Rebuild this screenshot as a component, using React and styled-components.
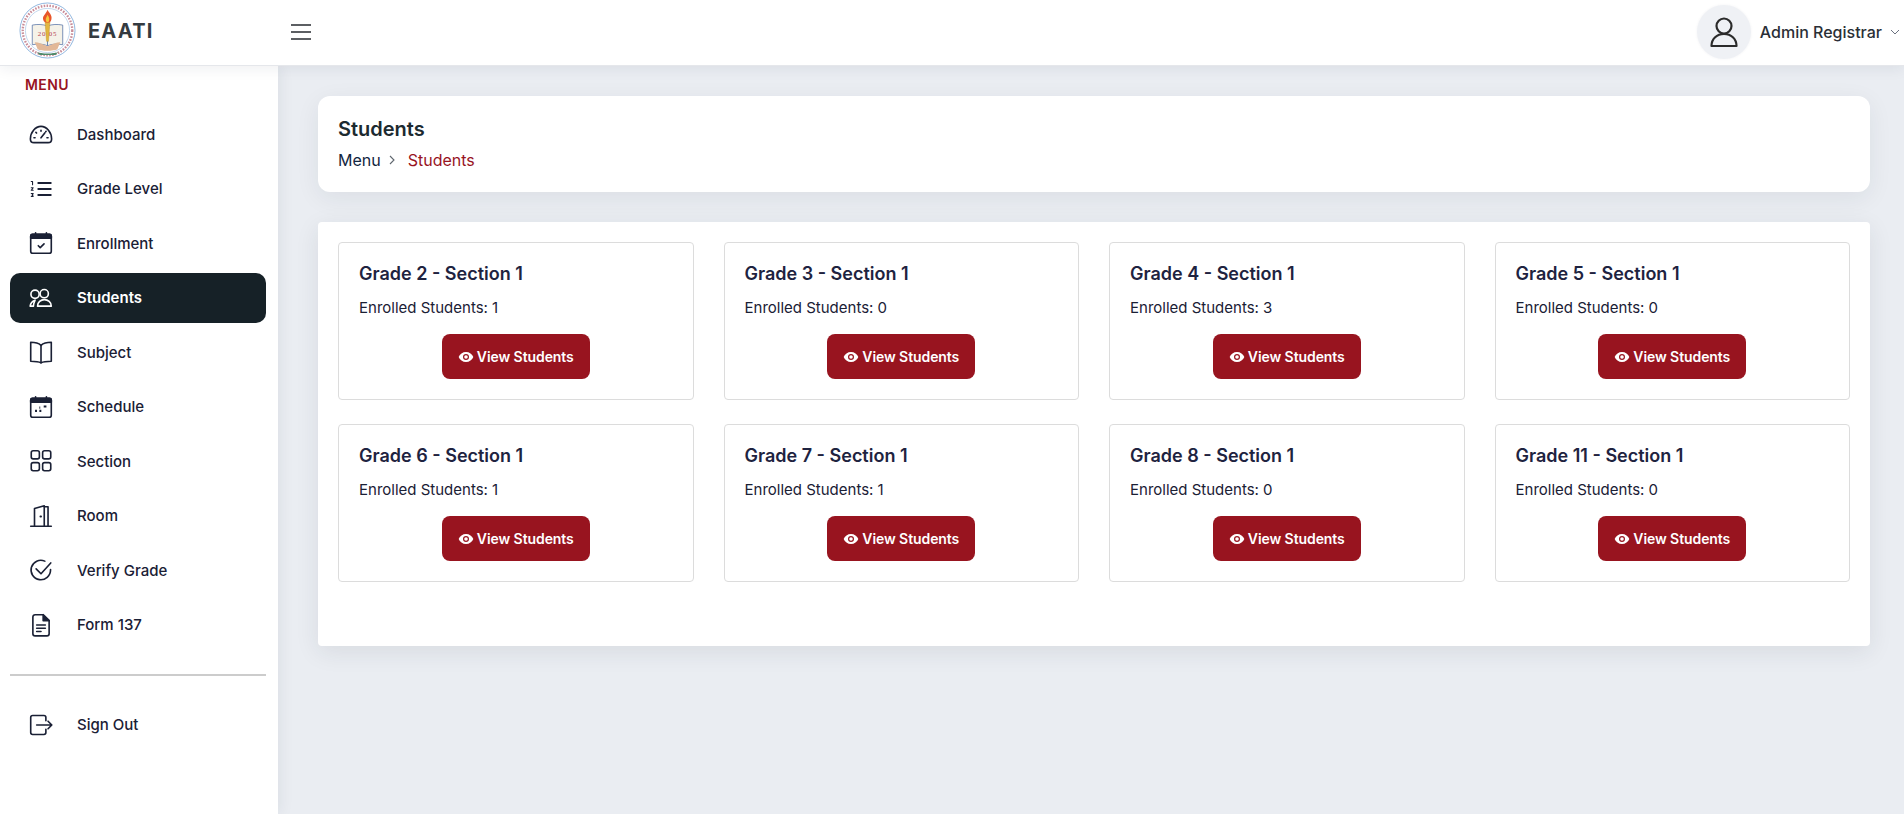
import React from "react";
import styled, { createGlobalStyle } from "styled-components";

const GlobalStyle = createGlobalStyle`
  html, body {
    margin: 0;
    padding: 0;
    background: #eaedf2;
    font-family: Inter, "Noto Sans", sans-serif;
    color: #1a2035;
  }
  * {
    box-sizing: border-box;
  }
`;

const Icon = ({ children, size = 26, stroke = "currentColor", width = 1.5 }) => (
  <svg width={size} height={size} viewBox="0 0 24 24" fill="none" stroke={stroke} strokeWidth={width} strokeLinecap="round" strokeLinejoin="round">
    {children}
  </svg>
);

const Logo = () => (
  <svg width="57" height="57" viewBox="0 0 58 58">
    <circle cx="29" cy="29" r="28" fill="#fff" stroke="#8fb6de" strokeWidth="1" />
    <circle cx="29" cy="29" r="22.5" fill="none" stroke="#a9c6e6" strokeWidth="0.7" />
    <circle cx="29" cy="29" r="25.2" fill="none" stroke="#c98d99" strokeWidth="2.4" strokeDasharray="1.6 1.4" />
    <path d="M13.500 23.500c5-1 11-1 15.500 1v20c-4.500-2-10.500-2-15.500-1z" fill="#f5f2e8" stroke="#5b77a8" strokeWidth="0.8" />
    <path d="M44.500 23.500c-5-1-11-1-15.500 1v20c4.500-2 10.500-2 15.500-1z" fill="#f5f2e8" stroke="#5b77a8" strokeWidth="0.8" />
    <text x="29" y="35" textAnchor="middle" fontSize="7" fontFamily="Liberation Serif, serif" fill="#b4404f" letterSpacing="0.8">20 05</text>
    <path d="M16 41c4 0 8 2 13 4 5-2 9-4 13-4l-3 7c-4 2-16 2-20 0z" fill="#e2b898" />
    <path d="M18 51c4 2 18 2 22 0l-3 3H21z" fill="#4e8a6b" />
    <path d="M26.500 20h5L30 40h-2z" fill="#e2b640" stroke="#b98b1f" strokeWidth="0.4" />
    <path d="M29 8c1 3 5 5 4 9.500-.5 2.800-2 3.500-4 3.500s-4-.7-4.500-3.500C24 14 27 13 29 8z" fill="#e8562a" />
    <path d="M29 13c1 2 2 2.500 1.800 5C30.500 20 30 20.500 29 20.500s-1.800-1-1.800-2.500C27.200 16 28.500 15 29 13z" fill="#f6c63c" />
  </svg>
);

const icons = {
  dashboard: (
    <Icon>
      <path d="M5.500 20h13c1.900 0 3.300-1.400 3.300-3.500C21.800 10.500 17.300 5 12 5S2.200 10.500 2.200 16.500C2.200 18.600 3.600 20 5.500 20z" />
      <path d="M12 15.500l3.500-4.500M5.500 15.500h1M17.500 15.500h1M7.300 10.500l.6.600M12 8.500v1M16.700 9.500l-.3.300" />
    </Icon>
  ),
  grade: (
    <Icon>
      <path d="M9.500 6.500h11.500M9.500 12h11.500M9.500 17.500h11.500" strokeWidth="1.8" />
      <path d="M3 5h1.200v3M3 10.800h1.800l-1.800 2.400h1.800M3 16.200h1.800l-.9 1.200.9 1.400H3" strokeWidth="1" />
    </Icon>
  ),
  enrollment: (
    <Icon>
      <rect x="2.500" y="4" width="19" height="17.500" rx="2" />
      <path d="M2.500 5.500A1.500 1.500 0 0 1 4 4h16a1.500 1.500 0 0 1 1.500 1.500V7.500h-19z" fill="currentColor" />
      <path d="M7 2.500v2M17 2.500v2" />
      <path d="M9.500 14.500l1.800 1.800 3.500-3.500" />
    </Icon>
  ),
  students: (
    <Icon>
      <circle cx="6.500" cy="8.500" r="3.800" />
      <circle cx="15" cy="8" r="3.800" />
      <path d="M8.800 19.500c0-3.500 3-6 6.300-6s6.400 2.500 6.400 6z" />
      <path d="M2 19.500c.3-2.500 1.500-4.500 4.500-5.500-.8 1.800-1.500 3.500-1.500 5.500z" />
    </Icon>
  ),
  subject: (
    <Icon>
      <path d="M12 5.800C10 4 7 3 2.500 3v17.500c4.500 0 7.500.4 9.500 1.500 2-1.100 5-1.500 9.500-1.500V3C17 3 14 4 12 5.800z" />
      <path d="M12 5.800V22" />
    </Icon>
  ),
  schedule: (
    <Icon>
      <rect x="2.500" y="4" width="19" height="17.500" rx="2" />
      <path d="M2.500 5.500A1.500 1.500 0 0 1 4 4h16a1.500 1.500 0 0 1 1.500 1.500V7.500h-19z" fill="currentColor" />
      <path d="M7 2.500v2M17 2.500v2" />
      <path d="M6.500 15.500h1.800M10.500 15.500h1.800M10.500 12.500h.8M14.500 11.500h2.500" strokeWidth="2" strokeLinecap="butt" />
    </Icon>
  ),
  section: (
    <Icon>
      <rect x="3" y="2.500" width="7.500" height="7.500" rx="1.800" />
      <rect x="13.500" y="2.500" width="7.500" height="7.500" rx="1.800" />
      <rect x="3" y="13.500" width="7.500" height="7.500" rx="1.800" />
      <rect x="13.500" y="13.500" width="7.500" height="7.500" rx="1.800" />
    </Icon>
  ),
  room: (
    <Icon>
      <path d="M2.500 21.500h19M6 21.500V5l9-2.500v19" />
      <path d="M15 3.500h3.500v18" />
      <path d="M11.500 12.500h.5" strokeWidth="1.8" />
    </Icon>
  ),
  verify: (
    <Icon>
      <path d="M20.800 11.500v.5A9 9 0 1 1 15.500 3.800" />
      <path d="M7.500 11l4.500 4.500 9-10" />
    </Icon>
  ),
  form: (
    <Icon>
      <path d="M14 2.500H6.500a2 2 0 0 0-2 2v15.500a2 2 0 0 0 2 2h11a2 2 0 0 0 2-2V8z" />
      <path d="M14 2.500V8h5.500z" fill="currentColor" />
      <path d="M8 12h8M8 15h8M8 18h4" />
    </Icon>
  ),
  signout: (
    <Icon>
      <path d="M16.500 8V5a1.800 1.800 0 0 0-1.800-1.800H4.300A1.800 1.800 0 0 0 2.500 5v14a1.800 1.800 0 0 0 1.800 1.800h10.400a1.800 1.800 0 0 0 1.800-1.800v-3" />
      <path d="M8 12h14M18.500 8.500L22 12l-3.500 3.500" />
    </Icon>
  ),
};

const menu = [
  { key: "dashboard", label: "Dashboard" },
  { key: "grade", label: "Grade Level" },
  { key: "enrollment", label: "Enrollment" },
  { key: "students", label: "Students", active: true },
  { key: "subject", label: "Subject" },
  { key: "schedule", label: "Schedule" },
  { key: "section", label: "Section" },
  { key: "room", label: "Room" },
  { key: "verify", label: "Verify Grade" },
  { key: "form", label: "Form 137" },
];

const sections = [
  { name: "Grade 2 - Section 1", count: 1 },
  { name: "Grade 3 - Section 1", count: 0 },
  { name: "Grade 4 - Section 1", count: 3 },
  { name: "Grade 5 - Section 1", count: 0 },
  { name: "Grade 6 - Section 1", count: 1 },
  { name: "Grade 7 - Section 1", count: 1 },
  { name: "Grade 8 - Section 1", count: 0 },
  { name: "Grade 11 - Section 1", count: 0 },
];

const App = () => {
  return (
    <Page>
      <GlobalStyle />
      <Topbar>
        <Brand>
          <Logo />
          <BrandName>EAATI</BrandName>
        </Brand>
        <Burger>
          <span />
          <span />
          <span />
        </Burger>
        <User>
          <Avatar>
            <svg width="32" height="32" viewBox="0 0 32 32" fill="none" stroke="#2b2b2b" strokeWidth="2.2" strokeLinejoin="round">
              <circle cx="16" cy="10" r="7.500" />
              <path d="M3.500 30c0-7.500 5.500-12 12.500-12s12.500 4.500 12.500 12z" />
            </svg>
          </Avatar>
          <UserName>Admin Registrar</UserName>
          <svg width="10" height="10" viewBox="0 0 10 10" fill="none" stroke="#6b7280" strokeWidth="1">
            <path d="M1 3l4 4 4-4" />
          </svg>
        </User>
      </Topbar>
      <Body>
        <Sidebar>
          <MenuTitle>MENU</MenuTitle>
          <Nav>
            {menu.map((item) => (
              <NavItem key={item.key} $active={item.active}>
                {icons[item.key]}
                <span>{item.label}</span>
              </NavItem>
            ))}
          </Nav>
          <Divider />
          <NavItem>
            {icons.signout}
            <span>Sign Out</span>
          </NavItem>
        </Sidebar>
        <Main>
          <Header>
            <Title>Students</Title>
            <Crumbs>
              <span>Menu</span>
              <svg width="10" height="10" viewBox="0 0 10 10" fill="none" stroke="#5f666e" strokeWidth="1.1">
                <path d="M3 1l4 4-4 4" />
              </svg>
              <Current>Students</Current>
            </Crumbs>
          </Header>
          <Panel>
            <Grid>
              {sections.map((s) => (
                <Card key={s.name}>
                  <CardTitle>{s.name}</CardTitle>
                  <CardText>Enrolled Students: {s.count}</CardText>
                  <ViewButton>
                    <svg width="16" height="16" viewBox="0 0 24 24" fill="#fff" fillRule="evenodd">
                      <path d="M12 4.500C7 4.500 2.700 7.600 1 12c1.700 4.400 6 7.500 11 7.500s9.300-3.100 11-7.500c-1.700-4.400-6-7.500-11-7.500zM12 7.500a4.500 4.500 0 1 1 0 9 4.500 4.500 0 0 1 0-9z" />
                      <circle cx="12" cy="12" r="2.700" />
                    </svg>
                    View Students
                  </ViewButton>
                </Card>
              ))}
            </Grid>
          </Panel>
        </Main>
      </Body>
    </Page>
  );
};

const Page = styled.div`
  min-height: 814px;
  display: flex;
  flex-direction: column;
`;

const Topbar = styled.header`
  height: 66px;
  background: #fff;
  display: flex;
  align-items: center;
  border-bottom: 1px solid #e5e7eb;
  box-shadow: 0 2px 14px rgba(30, 40, 60, 0.08);
  position: relative;
  z-index: 2;
`;

const Brand = styled.div`
  width: 278px;
  padding: 0 0 4px 19px;
  display: flex;
  align-items: center;
  gap: 12px;
`;

const BrandName = styled.span`
  font-size: 20px;
  font-weight: 700;
  letter-spacing: 1.2px;
  color: #343a40;
`;

const Burger = styled.div`
  width: 20px;
  display: flex;
  flex-direction: column;
  gap: 5px;
  margin: 0 0 2px 13px;
  span {
    display: block;
    height: 2px;
    background: #5c5f63;
  }
`;

const User = styled.div`
  margin-left: auto;
  padding: 0 4px 1px 0;
  display: flex;
  align-items: center;
  gap: 8px;
`;

const Avatar = styled.div`
  width: 54px;
  height: 54px;
  border-radius: 50%;
  background: #eff1f5;
  box-shadow: 0 0 3px rgba(30, 40, 60, 0.06);
  display: flex;
  align-items: center;
  justify-content: center;
`;

const UserName = styled.span`
  font-size: 16px;
  font-weight: 500;
  color: #2a2f36;
  margin-left: 1px;
`;

const Body = styled.div`
  flex: 1;
  display: flex;
`;

const Sidebar = styled.aside`
  width: 278px;
  background: #fff;
  padding: 10px 12px 0 10px;
  box-shadow: 2px 0 14px rgba(30, 40, 60, 0.07);
`;

const MenuTitle = styled.div`
  font-size: 14px;
  font-weight: 600;
  letter-spacing: 0.4px;
  color: #98141f;
  margin-left: 15px;
  line-height: 17px;
  margin-bottom: 16px;
`;

const Nav = styled.nav`
  display: flex;
  flex-direction: column;
  gap: 4.5px;
`;

const NavItem = styled.div`
  height: 50px;
  display: flex;
  align-items: center;
  gap: 23px;
  padding-left: 18px;
  border-radius: 10px;
  font-size: 15px;
  font-weight: ${(p) => (p.$active ? 600 : 500)};
  color: ${(p) => (p.$active ? "#fff" : "#1a2035")};
  background: ${(p) => (p.$active ? "#162127" : "transparent")};
`;

const Divider = styled.div`
  height: 2px;
  background: #cccccc;
  margin: 24px 0 24px;
`;

const Main = styled.main`
  flex: 1;
  padding: 30px 34px 0 40px;
`;

const Header = styled.section`
  height: 96px;
  background: #fff;
  border-radius: 12px;
  padding: 21px 20px 0;
  box-shadow: 0 6px 24px rgba(30, 40, 60, 0.07);
`;

const Title = styled.h1`
  margin: 0;
  font-size: 20px;
  font-weight: 600;
  line-height: 24px;
  color: #1c2a30;
`;

const Crumbs = styled.div`
  margin-top: 9px;
  display: flex;
  align-items: center;
  gap: 6px;
  font-size: 16px;
  line-height: 20px;
  color: #12263f;
`;

const Current = styled.span`
  margin-left: 5px;
  color: #98141f;
`;

const Panel = styled.section`
  margin-top: 30px;
  height: 424px;
  background: #fff;
  border-radius: 4px;
  padding: 20px;
  box-shadow: 0 6px 24px rgba(30, 40, 60, 0.09);
`;

const Grid = styled.div`
  display: grid;
  grid-template-columns: repeat(4, 1fr);
  column-gap: 30px;
  row-gap: 24px;
`;

const Card = styled.div`
  height: 158px;
  border: 1px solid #dcdcdc;
  border-radius: 4px;
  padding: 20px;
`;

const CardTitle = styled.h3`
  margin: 0;
  font-size: 18px;
  font-weight: 600;
  line-height: 22px;
  color: #1e2340;
`;

const CardText = styled.p`
  margin: 14px 0 0;
  font-size: 15px;
  line-height: 18px;
  color: #1a2035;
`;

const ViewButton = styled.button`
  display: flex;
  align-items: center;
  justify-content: center;
  gap: 3px;
  width: 148px;
  height: 45px;
  margin: 17px auto 0;
  border: none;
  border-radius: 8px;
  background: #98141f;
  color: #fff;
  font-family: inherit;
  font-size: 14px;
  font-weight: 600;
  letter-spacing: -0.08px;
`;

export default App;
